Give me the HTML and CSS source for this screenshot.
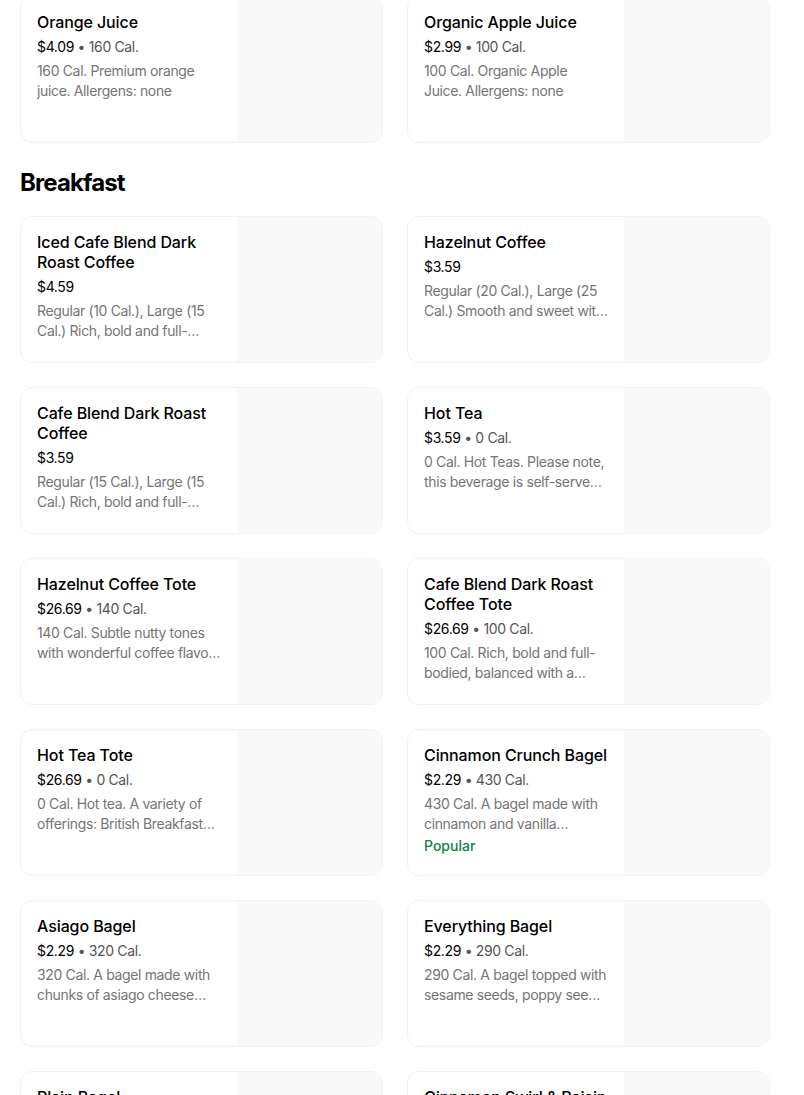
FILE: index.html
```html
<!DOCTYPE html>
<html>
<head>
<meta charset="utf-8">
<link rel="stylesheet" href="styles.css">
</head>
<body>
<div class="page">
  <div class="grid first">
    <div class="card"><div class="info"><div class="title">Orange Juice</div><div class="price">$4.09 <span class="dot">•</span> <span class="cal">160 Cal.</span></div><div class="desc">160 Cal. Premium orange juice. Allergens: none</div></div><div class="img"></div></div>
    <div class="card"><div class="info"><div class="title">Organic Apple Juice</div><div class="price">$2.99 <span class="dot">•</span> <span class="cal">100 Cal.</span></div><div class="desc">100 Cal. Organic Apple Juice. Allergens: none</div></div><div class="img"></div></div>
  </div>
  <h2 class="section">Breakfast</h2>
  <div class="grid">
    <div class="card"><div class="info"><div class="title">Iced Cafe Blend Dark Roast Coffee</div><div class="price">$4.59</div><div class="desc">Regular (10 Cal.), Large (15 Cal.) Rich, bold and full-bodied, balanced with a smooth finish.</div></div><div class="img"></div></div>
    <div class="card"><div class="info"><div class="title">Hazelnut Coffee</div><div class="price">$3.59</div><div class="desc">Regular (20 Cal.), Large (25 Cal.) Smooth and sweet with subtle nutty tones.</div></div><div class="img"></div></div>
    <div class="card"><div class="info"><div class="title">Cafe Blend Dark Roast Coffee</div><div class="price">$3.59</div><div class="desc">Regular (15 Cal.), Large (15 Cal.) Rich, bold and full-bodied, balanced with a smooth finish.</div></div><div class="img"></div></div>
    <div class="card"><div class="info"><div class="title">Hot Tea</div><div class="price">$3.59 <span class="dot">•</span> <span class="cal">0 Cal.</span></div><div class="desc">0 Cal. Hot Teas. Please note, this beverage is self-serve unsweetened tea.</div></div><div class="img"></div></div>
    <div class="card"><div class="info"><div class="title">Hazelnut Coffee Tote</div><div class="price">$26.69 <span class="dot">•</span> <span class="cal">140 Cal.</span></div><div class="desc">140 Cal. Subtle nutty tones with wonderful coffee flavor. Serves 8-10.</div></div><div class="img"></div></div>
    <div class="card"><div class="info"><div class="title">Cafe Blend Dark Roast Coffee Tote</div><div class="price">$26.69 <span class="dot">•</span> <span class="cal">100 Cal.</span></div><div class="desc">100 Cal. Rich, bold and full-bodied, balanced with a smooth finish.</div></div><div class="img"></div></div>
    <div class="card"><div class="info"><div class="title">Hot Tea Tote</div><div class="price">$26.69 <span class="dot">•</span> <span class="cal">0 Cal.</span></div><div class="desc">0 Cal. Hot tea. A variety of offerings: British Breakfast Green and Herbal.</div></div><div class="img"></div></div>
    <div class="card"><div class="info"><div class="title">Cinnamon Crunch Bagel</div><div class="price">$2.29 <span class="dot">•</span> <span class="cal">430 Cal.</span></div><div class="desc">430 Cal. A bagel made with cinnamon and vanilla crystallized cinnamon crunch topping.</div><div class="popular">Popular</div></div><div class="img"></div></div>
    <div class="card"><div class="info"><div class="title">Asiago Bagel</div><div class="price">$2.29 <span class="dot">•</span> <span class="cal">320 Cal.</span></div><div class="desc">320 Cal. A bagel made with chunks of asiago cheese baked in and on top.</div></div><div class="img"></div></div>
    <div class="card"><div class="info"><div class="title">Everything Bagel</div><div class="price">$2.29 <span class="dot">•</span> <span class="cal">290 Cal.</span></div><div class="desc">290 Cal. A bagel topped with sesame seeds, poppy seeds, garlic, onion and salt.</div></div><div class="img"></div></div>
    <div class="card"><div class="info"><div class="title">Plain Bagel</div><div class="price">$1.99 <span class="dot">•</span> <span class="cal">290 Cal.</span></div><div class="desc">290 Cal. A classic plain bagel.</div></div><div class="img"></div></div>
    <div class="card"><div class="info"><div class="title">Cinnamon Swirl &amp; Raisin Bagel</div><div class="price">$2.29 <span class="dot">•</span> <span class="cal">320 Cal.</span></div><div class="desc">320 Cal. A bagel with cinnamon swirls and raisins.</div></div><div class="img"></div></div>
  </div>
</div>
</body>
</html>
```
FILE: styles.css
```css
* { box-sizing: border-box; }
html, body { margin: 0; padding: 0; background: #fff; }
body { font-family: Inter, "Liberation Sans", sans-serif; color: #000; overflow: hidden; }
.page { width: 750px; margin-left: 20px; }
.grid { display: grid; grid-template-columns: 363px 363px; column-gap: 24px; row-gap: 24px; }
.grid.first { margin-top: -4px; }
.card {
  height: 147px;
  border: 1px solid #f2f2f2;
  border-radius: 12px;
  overflow: hidden;
  display: flex;
  background: #fff;
}
.info { flex: 1; padding: 15px 16px 0 16px; min-width: 0; }
.img { width: 145px; flex: none; background: #f9f9f9; }
.title { font-size: 16px; font-weight: 500; line-height: 20px; letter-spacing: -0.1px; color: #000; }
.price { font-size: 14px; line-height: 20px; margin-top: 5px; color: #000; letter-spacing: -0.35px; }
.dot { color: #545454; }
.cal { color: #545454; }
.desc {
  font-size: 14px; line-height: 20px; margin-top: 4px; color: #757575; letter-spacing: -0.35px;
  display: -webkit-box; -webkit-line-clamp: 2; -webkit-box-orient: vertical; overflow: hidden;
}
.popular { font-size: 14px; line-height: 20px; margin-top: 2px; color: #0e8345; font-weight: 500; }
.section { font-size: 24px; font-weight: 700; line-height: 28px; margin: 26px 0 19px 0; letter-spacing: -0.9px; }
```
